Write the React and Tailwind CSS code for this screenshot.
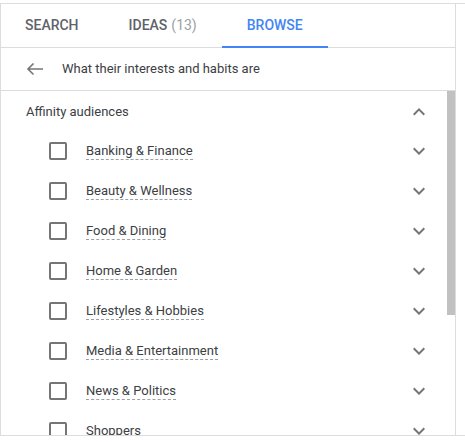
const categories = [
  "Banking & Finance",
  "Beauty & Wellness",
  "Food & Dining",
  "Home & Garden",
  "Lifestyles & Hobbies",
  "Media & Entertainment",
  "News & Politics",
  "Shoppers",
  "Sports & Fitness",
  "Technology",
  "Travel",
];

function Chevron({ up }) {
  return (
    <svg width="24" height="24" viewBox="0 0 24 24" className="shrink-0">
      <path
        d={up ? "M7.41 15.41L12 10.83l4.59 4.58L18 14l-6-6-6 6z" : "M16.59 8.59L12 13.17 7.41 8.59 6 10l6 6 6-6z"}
        fill="#757575"
      />
    </svg>
  );
}

function Tab({ children, active, first }) {
  return (
    <div
      className={`relative flex h-full items-center ${first ? "pl-6 pr-[25px]" : "px-[25px]"} text-[14px] font-medium uppercase ${
        active ? "text-[#4285f4]" : "text-[#5f6368]"
      }`}
    >
      {children}
      {active && <span className="absolute bottom-[-1px] left-0 right-0 h-[2px] bg-[#4285f4]"></span>}
    </div>
  );
}

export default function App() {
  return (
    <div className="bg-white pt-[3px]" style={{ fontFamily: "Roboto, 'Liberation Sans', sans-serif" }}>
      <div className="flex border-y border-[#dadce0]">
        <div className="flex h-[431px] w-[456px] shrink-0 flex-col border-x border-[#dadce0]">
          {/* tabs */}
          <div className="flex h-[44px] shrink-0 border-b border-[#dadce0]">
            <Tab first>Search</Tab>
            <Tab>
              Ideas <span className="ml-1 font-normal text-[#9aa0a6]">(13)</span>
            </Tab>
            <Tab active>Browse</Tab>
          </div>

          {/* breadcrumb */}
          <div className="flex h-[43px] shrink-0 items-center border-b border-[#dadce0] pl-[25px] text-[13px] text-[#3c4043]">
            <svg width="18" height="14" viewBox="0 0 18 14" className="mr-[18px] shrink-0">
              <path d="M17 7H2M7.5 1.5L2 7l5.5 5.5" fill="none" stroke="#757575" strokeWidth="1.6" />
            </svg>
            What their interests and habits are
          </div>

          {/* list */}
          <div className="relative flex-1 overflow-hidden">
            <div className="flex h-[40px] items-center justify-between pl-[25px] pr-6 pt-px text-[13px] text-[#3c4043]">
              <span>Affinity audiences</span>
              <Chevron up />
            </div>
            {categories.map((c) => (
              <div key={c} className="flex h-[40px] items-center justify-between pl-[48px] pr-6">
                <div className="flex items-center">
                  <span className="mr-[19px] h-[18px] w-[18px] rounded-[2px] border-2 border-[#757575]"></span>
                  <span className="border-b border-dashed border-[#9aa0a6] text-[13px] leading-[17px] text-[#3c4043]">
                    {c}
                  </span>
                </div>
                <Chevron />
              </div>
            ))}
            <div className="absolute right-0 top-0 h-[224px] w-[8px] bg-[#c1c1c1]"></div>
          </div>
        </div>
        <div className="flex-1"></div>
      </div>
    </div>
  );
}
